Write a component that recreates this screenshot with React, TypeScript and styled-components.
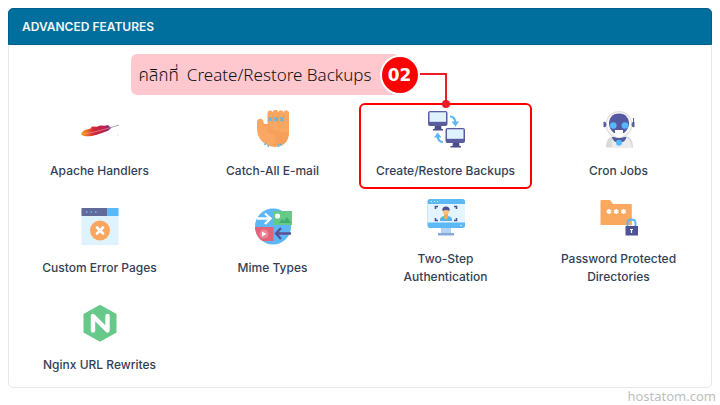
import React from "react";
import styled, { createGlobalStyle } from "styled-components";

const GlobalStyle = createGlobalStyle`
  *, *::before, *::after { box-sizing: border-box; }
  body {
    margin: 0;
    background: #fff;
    color: #343f56;
    font-family: Inter, "Open Sans", sans-serif;
  }
`;

const Page = styled.main`
  padding: 8px 8px 0;
`;

const Panel = styled.section`
  border: 1px solid #e6e7ec;
  border-top: 0;
  border-radius: 5px;
`;

const PanelHeader = styled.header`
  display: flex;
  align-items: center;
  height: 37px;
  margin: 0 -1px;
  padding: 0 13px;
  border: 1px solid #005f8c;
  border-radius: 5px 5px 0 0;
  background: #006f9d;
`;

const PanelTitle = styled.h2`
  margin: 0;
  color: #f3f8fb;
  font-size: 12px;
  font-weight: 600;
  line-height: 16px;
`;

const FeatureGrid = styled.ul`
  display: grid;
  grid-template-columns: repeat(4, 1fr);
  align-items: center;
  row-gap: 18px;
  margin: 0;
  padding: 65px 6px 13px 4px;
  list-style: none;
`;

const FeatureCell = styled.li`
  position: relative;
`;

const FeatureLink = styled.a`
  display: flex;
  flex-direction: column;
  align-items: center;
  gap: 14px;
  color: inherit;
  text-decoration: none;
`;

const FeatureLabel = styled.span`
  max-width: 144px;
  font-size: 12px;
  font-weight: 500;
  line-height: 18px;
  text-align: center;
  white-space: pre-line;
`;

const Icon = styled.svg.attrs({ width: 38, height: 38, viewBox: "0 0 38 38", "aria-hidden": true })`
  display: block;
  flex: none;
`;

const Highlight = styled.div`
  position: absolute;
  inset: -7px 0 -9px;
  border: 2px solid #f00;
  border-radius: 6px;
  pointer-events: none;
`;

const Callout = styled.div`
  position: absolute;
  right: 50%;
  bottom: calc(100% + 15px);
  display: flex;
  align-items: center;
`;

const CalloutText = styled.p`
  display: flex;
  gap: 8px;
  height: 41px;
  margin: 0 -20px 0 0;
  padding: 0 28px 0 8px;
  border-radius: 6px;
  background: #ffc7ce;
  color: #111;
  font-family: "Noto Sans", "Noto Sans Thai", sans-serif;
  font-size: 17px;
  font-weight: 300;
  line-height: 41px;
  white-space: nowrap;
`;

const StepBadge = styled.strong`
  display: grid;
  place-items: center;
  width: 40px;
  height: 40px;
  border: 2px solid #fff;
  border-radius: 50%;
  background: #f00;
  color: #fff;
  font-family: "DejaVu Sans", sans-serif;
  font-size: 17px;
  line-height: 20px;
`;

const Connector = styled.svg`
  display: block;
  align-self: flex-start;
  margin: 19px -5px -20px 0;
`;

const Watermark = styled.footer`
  margin-right: -4px;
  color: #bebebe;
  font-family: "Noto Sans", sans-serif;
  font-size: 13px;
  line-height: 16px;
  text-align: right;
`;

const ApacheIcon = () => (
  <Icon>
    <defs>
      <linearGradient id="feather" x1="0" x2="1">
        <stop offset="0" stopColor="#f8a21b" />
        <stop offset=".2" stopColor="#ee6a25" />
        <stop offset=".4" stopColor="#d22838" />
        <stop offset=".75" stopColor="#bd2150" />
        <stop offset="1" stopColor="#6d3192" />
      </linearGradient>
    </defs>
    <path d="M.3 24.500C0 21.500 4 19.500 9.500 18.500L11 16.500 16 16.800 19 15.500 24 15.800 27 15 28.500 16.500 30.500 17.700 27 20.800 21 23 15 25C9 26.500 2 27 .3 24.500Z" fill="url(#feather)" />
    <path d="M3 23.800C12 23 20 20 29 17.700" fill="none" stroke="#f2a39d" strokeWidth=".6" />
    <path d="M28 18 38 15" stroke="#8a7a9d" strokeWidth=".7" />
    <circle cx="37" cy="25" r=".5" fill="#bbb" />
  </Icon>
);

const HandIcon = () => (
  <Icon>
    <path d="M3 11.500C3 8.500 8.500 7.500 9.300 11L10 14H13.500V3.500A2.700 2.700 0 0 1 18.800 2.500 2.700 2.700 0 0 1 24.200 2.500 2.700 2.700 0 0 1 29.500 2.500 2.800 2.800 0 0 1 35 3.500V22C35 29 32.500 33 28 35.500Q21 38.500 13 35C6 31 3 25 3 19Z" fill="#faa763" />
    <path d="M14 14Q17 20 23 21L34.800 22.500C34.500 29 31 33 28 35H18Q24 31 20 25L13 22Z" fill="#f6a05b" />
    <path d="M18.800 3.500V13M24.200 3.500V13M29.500 3.500V13M10 14Q12 16 14 15" fill="none" stroke="#f0994f" strokeWidth=".8" />
    <path d="m14.500 7.500 3.500 3.500m0-3.500L14.500 11m5.800-3.500 3.500 3.500m0-3.500L20.300 11m5.800-3.500 3.500 3.500m0-3.500L26.100 11M10.500 35l1.500-2m2.500 4-.5-2m10.500 2 .5-2.500m2 1-.5-2" fill="none" stroke="#55b8f5" strokeWidth="1.300" />
  </Icon>
);

const BackupIcon = () => (
  <Icon>
    <path d="M8 15h6l.5 4H16v1.500H6V19h1.500ZM26 32h6l.5 4H34v1.500H23.500V36h2Z" fill="#4d4c8b" />
    <rect x="1" y="1" width="19.500" height="15" rx="2" fill="#5b5c9e" />
    <path d="M2.500 2.300h16.500v9.500h-16.500Z" fill="#def2fe" />
    <rect x="18.500" y="18" width="19.500" height="15" rx="2" fill="#5b5c9e" />
    <path d="M20 19.300h16.500v9.500H20Z" fill="#def2fe" />
    <path d="M23 6.500q5 0 5.300 6M16 32q-5 0-5.300-6" fill="none" stroke="#57b7f7" strokeWidth="2.200" />
    <path d="m24.500 11.500 4 5 3.500-5ZM7 27.500l3.700-5 3.800 5Z" fill="#57b7f7" />
  </Icon>
);

const RobotIcon = () => (
  <Icon>
    <path d="M6 37.500C6 30 9 26 15 26H24C30 26 33 30 33 37.500Z" fill="#d9dadc" />
    <path d="M12 37.500Q11 29 14 27H26Q31 29 31.500 37.500Z" fill="#ececed" />
    <path d="M12 27h14.500q-1 5.500-7.300 5.500T12 27Z" fill="#5459a0" />
    <circle cx="19" cy="14.500" r="13.500" fill="#e0e0e3" />
    <circle cx="19" cy="14.500" r="12.300" fill="#f8f8f9" />
    <path d="M19 3.500c7 0 10 5 10 10 0 4-2 7-5 9.500H14c-3-2.500-5-5.500-5-9.500 0-5 3-10 10-10Z" fill="#5459a0" />
    <path d="M15 20h8v6q-4 3-8 0Z" fill="#fff" />
    <circle cx="19" cy="32.800" r="3" fill="#56bafa" />
    <circle cx="13.300" cy="15.500" r="3.300" fill="#56bafa" />
    <circle cx="24.900" cy="15.500" r="3.300" fill="#56bafa" />
    <path d="M4 12q2 0 2 2.500T4 17ZM34 12q-2 0-2 2.500t2 2.500ZM33.500 8v4" fill="#5459a0" stroke="#5459a0" />
  </Icon>
);

const ErrorPageIcon = () => (
  <Icon>
    <path d="M.5 1h37v37H.5Z" fill="#dff3fe" />
    <path d="M.5 1h26v8H.5Z" fill="#626a9b" />
    <path d="M26.500 1h11v8h-11Z" fill="#57b9f8" />
    <path d="M5 5h1.500m3 0H11m3 0h1.500" stroke="#61bef8" strokeWidth="1.600" />
    <circle cx="19" cy="23.500" r="10" fill="#fba65e" />
    <path d="m16 20.500 6 6m0-6-6 6" stroke="#f6fbfe" strokeWidth="2.800" strokeLinecap="round" />
  </Icon>
);

const MimeIcon = () => (
  <Icon>
    <defs>
      <clipPath id="globe"><circle cx="19" cy="19.500" r="18" /></clipPath>
    </defs>
    <circle cx="19" cy="19.500" r="18" fill="#5bb7f8" />
    <path d="M0 20h19.500v14H0Z" fill="#e26379" clipPath="url(#globe)" />
    <path d="M19 4h19v14H19Z" fill="#65ca88" />
    <path d="m25 16 3-4 2 2 3-4 4 6Z" fill="#3fae70" />
    <circle cx="23.500" cy="9" r="2.600" fill="#fff" />
    <path d="M3 11.500h13M11 6.500l5.500 5-5.500 5.500" fill="none" stroke="#fff" strokeWidth="2.300" />
    <circle cx="10" cy="27" r="4.500" fill="#ee8495" />
    <path d="m8 24.500 4.500 2.500L8 29.500Z" fill="#fff" />
    <path d="M37 26.500H22M27 21l-5 5.500 5 5.500" fill="none" stroke="#5d5193" strokeWidth="2.400" />
  </Icon>
);

const TwoStepIcon = () => (
  <Icon>
    <path d="M14 29h10v7H14Z" fill="#b5d4f1" />
    <path d="M11 35h16v2.500H11Z" fill="#83aad8" />
    <rect x=".5" y="1" width="37.500" height="29" rx="2.500" fill="#5cb9f5" />
    <path d="M.5 6h37.500v18.500H.5Z" fill="#e3f5ff" />
    <path d="M4 3.500h1m2 0h1m2 0h1" stroke="#e3f5ff" strokeWidth="1.200" />
    <circle cx="34" cy="27.500" r=".8" fill="#e3f5ff" />
    <path d="M8.500 11V8.500H11M27 8.500h2.500V11M8.500 20v2.500H11M29.500 20v2.500H27" fill="none" stroke="#4d5097" strokeWidth="1.600" />
    <path d="M13 23v-2q1-3 5-3h2q4 0 5 3v2Z" fill="#54b3ef" />
    <path d="M17 16h4v4l-2 2-2-2Z" fill="#f6a857" />
    <circle cx="19" cy="13.500" r="3" fill="#ffc178" />
    <path d="M15.500 13q-1-4 3-4.500 5 0 4 4.500-3-2-7 0Z" fill="#4d5097" />
  </Icon>
);

const FolderIcon = () => (
  <Icon>
    <path d="M.5 3q0-1 1-1H10l3 4h18q.8 0 .8 1v20H.5Z" fill="#faa85f" />
    <path d="M9 11v5m-2.200-3.800 4.400 2.600m0-2.600-4.400 2.600M16.200 11v5M14 12.200l4.400 2.600m0-2.600L14 14.800M23.500 11v5m-2.200-3.800 4.400 2.600m0-2.600-4.400 2.600" stroke="#fff" strokeWidth="1.600" />
    <path d="M27.500 29v-4q0-3.500 4-3.500t4 3.500v4" fill="none" stroke="#56b8f5" strokeWidth="1.900" />
    <path d="M25.500 28H38v9.500H25.500Z" fill="#505298" />
    <path d="M30 31.500h3M31.500 31v4" stroke="#fff" strokeWidth="1.200" />
  </Icon>
);

const NginxIcon = () => (
  <Icon>
    <path d="m19 .8 16.500 9.300v18.400L19 37.800 2.500 28.500V10.100Z" fill="#66c98a" />
    <path d="M12 26.500V12L26.500 26.500V12" fill="none" stroke="#fff" strokeWidth="4.400" strokeLinejoin="round" strokeLinecap="round" />
  </Icon>
);

type Feature = { label: string; icon: React.ComponentType; step?: string };

const features: Feature[] = [
  { label: "Apache Handlers", icon: ApacheIcon },
  { label: "Catch-All E-mail", icon: HandIcon },
  { label: "Create/Restore Backups", icon: BackupIcon, step: "02" },
  { label: "Cron Jobs", icon: RobotIcon },
  { label: "Custom Error Pages", icon: ErrorPageIcon },
  { label: "Mime Types", icon: MimeIcon },
  { label: "Two-Step\nAuthentication", icon: TwoStepIcon },
  { label: "Password Protected\nDirectories", icon: FolderIcon },
  { label: "Nginx URL Rewrites", icon: NginxIcon },
];

const StepCallout = ({ step, label }: { step: string; label: string }) => (
  <>
    <Highlight />
    <Callout>
      <CalloutText>
        <span>คลิกที่</span>
        <span>{label}</span>
      </CalloutText>
      <StepBadge>{step}</StepBadge>
      <Connector width="31" height="36" viewBox="0 0 31 36" aria-hidden="true">
        <path d="M0 1h26v30" fill="none" stroke="#ed1c24" strokeWidth="2" />
        <circle cx="26" cy="31" r="4" fill="#ed1c24" />
      </Connector>
    </Callout>
  </>
);

export default function App() {
  return (
    <>
      <GlobalStyle />
      <Page>
        <Panel>
          <PanelHeader>
            <PanelTitle>ADVANCED FEATURES</PanelTitle>
          </PanelHeader>
          <FeatureGrid>
            {features.map(({ label, icon: Glyph, step }) => (
              <FeatureCell key={label}>
                <FeatureLink href="#">
                  <Glyph />
                  <FeatureLabel>{label}</FeatureLabel>
                </FeatureLink>
                {step && <StepCallout step={step} label={label} />}
              </FeatureCell>
            ))}
          </FeatureGrid>
        </Panel>
        <Watermark>hostatom.com</Watermark>
      </Page>
    </>
  );
}
